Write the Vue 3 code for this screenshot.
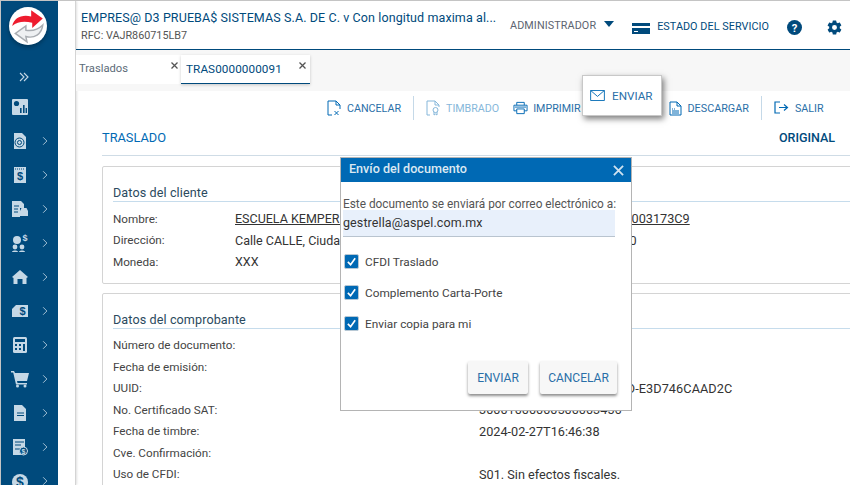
<script setup>
const navIcons = [
  { kind: 'chart', arrow: false },
  { kind: 'doc-at', arrow: true },
  { kind: 'doc-s', arrow: true },
  { kind: 'doc-car', arrow: true },
  { kind: 'people', arrow: true },
  { kind: 'home', arrow: true },
  { kind: 'folder', arrow: true },
  { kind: 'calc', arrow: true },
  { kind: 'cart', arrow: true },
  { kind: 'file', arrow: true },
  { kind: 'bill', arrow: true },
  { kind: 'coin', arrow: true }
]
const clientRows = [
  { label: 'Nombre:', value: 'ESCUELA KEMPER URGATE', u: true, right: 'EKU9003173C9', cls: 'rfc' },
  { label: 'Dirección:', value: 'Calle CALLE, Ciudad de México', right: 'C.P. 06000', cls: 'cp' },
  { label: 'Moneda:', value: 'XXX', right: '' }
]
const docRows = [
  { label: 'Número de documento:', right: 'TRAS0000000091' },
  { label: 'Fecha de emisión:', right: '2024-02-27T16:46:30' },
  { label: 'UUID:', right: '81002381-4041-4030-806D-E3D746CAAD2C', cls: 'uuid' },
  { label: 'No. Certificado SAT:', right: '30001000000500003456' },
  { label: 'Fecha de timbre:', right: '2024-02-27T16:46:38' },
  { label: 'Cve. Confirmación:', right: '' },
  { label: 'Uso de CFDI:', right: 'S01. Sin efectos fiscales.' }
]
const checks = ['CFDI Traslado', 'Complemento Carta-Porte', 'Enviar copia para mi']
</script>

<template>
  <div class="app">
    <aside class="side">
      <div class="logo">
        <svg viewBox="0 0 36 36" width="38" height="38">
          <circle cx="18" cy="18" r="18" fill="#fff"/>
          <path d="M3 18C5 10 12 7 21 9V3l11 8-10 9v-5c-8-2-14-1-19 3z" fill="#ee1c2e"/>
          <path d="M32 17c-1 9-8 13-16 11l1 5-11-8 10-7v4c6 1 12-1 16-5z" fill="#eef0f2" stroke="#a9adb2" stroke-width="1.400"/>
        </svg>
      </div>
      <svg class="dbl" viewBox="0 0 10 10" width="10" height="10"><path d="M1 1l4 4-4 4M5 1l4 4-4 4" fill="none" stroke="#c5d8e6" stroke-width="1.100"/></svg>
      <div class="nav">
        <div v-for="n in navIcons" :key="n.kind" class="nav-item">
          <svg viewBox="0 0 18 18" width="18" height="18" class="nav-ic">
            <g v-if="n.kind === 'chart'"><rect x="1" y="1" width="16" height="16" rx="1" fill="#c5d8e6"/><circle cx="5.500" cy="5.500" r="2.600" fill="#004a7c"/><path d="M9 15V10h1.600v5zM12 15V7h1.600v8zM14.600 15v-5H16v5z" fill="#004a7c"/></g>
            <g v-else-if="n.kind === 'doc-at'"><path d="M3 1h8l4 4v12H3z" fill="#c5d8e6"/><circle cx="8.500" cy="10.500" r="4.500" fill="none" stroke="#004a7c"/><circle cx="8.500" cy="10.500" r="2" fill="none" stroke="#004a7c"/></g>
            <g v-else-if="n.kind === 'doc-s'"><rect x="3" y="1" width="12" height="16" fill="#c5d8e6"/><path d="M4 3h10" stroke="#004a7c" stroke-dasharray="1 1"/><text x="9" y="14" text-anchor="middle" class="gl">$</text></g>
            <g v-else-if="n.kind === 'doc-car'"><path d="M1 1h9l3 3v4H9v9H1z" fill="#c5d8e6"/><path d="M3 6h5M3 9h4M3 12h4" stroke="#004a7c"/><path d="M9 11l1.500-3h5L17 11v5h-8z" fill="#c5d8e6"/></g>
            <g v-else-if="n.kind === 'people'"><circle cx="6" cy="6" r="4" fill="#c5d8e6"/><circle cx="4" cy="13" r="2.400" fill="#c5d8e6"/><circle cx="11" cy="13" r="2.400" fill="#c5d8e6"/><path d="M1 18c0-2 6-2 6 0zM8 18c0-2 6-2 6 0z" fill="#c5d8e6"/><text x="14" y="7" text-anchor="middle" class="gl2">$</text></g>
            <g v-else-if="n.kind === 'home'"><path d="M9 2l8 7-1.500 1v6h-4v-5h-5v5h-4v-6L1 9z" fill="#c5d8e6"/></g>
            <g v-else-if="n.kind === 'folder'"><path d="M5 3h12v12H1V7z" fill="#c5d8e6"/><text x="11.500" y="13" text-anchor="middle" class="gl">$</text></g>
            <g v-else-if="n.kind === 'calc'"><rect x="2" y="1" width="14" height="16" rx="1.500" fill="#c5d8e6"/><rect x="4" y="3" width="10" height="3" fill="#004a7c"/><path d="M4 8h2v2H4zM8 8h2v2H8zM12 8h2v7h-2zM4 12h2v2H4zM8 12h2v2H8z" fill="#004a7c"/></g>
            <g v-else-if="n.kind === 'cart'"><path d="M0 1h3l1 2h14l-2 8H6l.5 2H16v1.500H5L2.200 2.500H0z" fill="#c5d8e6"/><circle cx="6.500" cy="16" r="1.500" fill="#c5d8e6"/><circle cx="14" cy="16" r="1.500" fill="#c5d8e6"/></g>
            <g v-else-if="n.kind === 'file'"><path d="M3 1h8l4 4v12H3z" fill="#c5d8e6"/><path d="M6 9h7M6 11.500h7" stroke="#004a7c"/></g>
            <g v-else-if="n.kind === 'bill'"><path d="M2 1h12v9h-3v7H2z" fill="#c5d8e6"/><path d="M4 4h9M4 7h6M4 11h5" stroke="#004a7c"/><circle cx="12.500" cy="13" r="4" fill="#004a7c" stroke="#c5d8e6"/><text x="12.500" y="15.500" text-anchor="middle" class="gl3">$</text></g>
            <g v-else><circle cx="9" cy="10" r="8" fill="#c5d8e6"/><text x="9" y="15" text-anchor="middle" class="gl4">$</text></g>
          </svg>
          <svg v-if="n.arrow" viewBox="0 0 8 12" width="6" height="10" class="chev"><path d="M1.500 1l5 5-5 5" fill="none" stroke="#c5d8e6" stroke-width="1.100"/></svg>
        </div>
      </div>
    </aside>

    <div class="gutter"></div>

    <main class="main">
      <header class="top">
        <div class="company">
          <div class="c-name">EMPRES@ D3 PRUEBA$ SISTEMAS S.A. DE C. v Con longitud maxima al...</div>
          <div class="c-rfc">RFC: VAJR860715LB7</div>
        </div>
        <div class="user">ADMINISTRADOR</div>
        <svg class="caret" viewBox="0 0 10 6" width="10" height="6"><path d="M0 0h10L5 6z" fill="#004a7c"/></svg>
        <svg class="card" viewBox="0 0 18 11" width="18" height="11"><path d="M0 0h18v3H0zM0 5h18v6H0z" fill="#004a7c"/><path d="M2 8.500h4" stroke="#fff"/></svg>
        <div class="status">ESTADO DEL SERVICIO</div>
        <svg class="help" viewBox="0 0 16 16" width="15" height="15"><circle cx="8" cy="8" r="8" fill="#004a7c"/><text x="8" y="12.500" text-anchor="middle" class="q">?</text></svg>
        <svg class="gear" viewBox="0 0 24 24" width="17" height="17"><path fill="#004a7c" d="M19.400 13c.04-.33.1-.66.1-1s-.06-.67-.1-1l2.100-1.650c.2-.15.25-.42.13-.64l-2-3.460c-.12-.22-.39-.3-.61-.22l-2.490 1c-.52-.4-1.080-.73-1.690-.98l-.38-2.650A.5.5 0 0 0 14 2h-4a.5.5 0 0 0-.49.42l-.38 2.650c-.61.25-1.170.59-1.690.98l-2.490-1c-.23-.09-.49 0-.61.22l-2 3.460c-.13.22-.07.49.12.64L4.570 11c-.04.33-.07.66-.07 1s.03.67.07 1l-2.110 1.650c-.19.15-.25.42-.12.64l2 3.460c.12.22.39.3.61.22l2.490-1c.52.4 1.080.73 1.690.98l.38 2.650c.03.24.24.42.49.42h4c.25 0 .46-.18.49-.42l.38-2.650c.61-.25 1.170-.59 1.690-.98l2.490 1c.23.09.49 0 .61-.22l2-3.460c.12-.22.07-.49-.13-.64zM12 15.500a3.500 3.500 0 1 1 0-7 3.500 3.500 0 0 1 0 7z"/></svg>
      </header>

      <div class="tabs">
        <div class="tab first"><span>Traslados</span><svg class="x" viewBox="0 0 7 7" width="7" height="7"><path d="M.5.5l6 6M6.500.5l-6 6" stroke="#555" stroke-width="1.300"/></svg></div>
        <div class="tab active"><span>TRAS0000000091</span><svg class="x" viewBox="0 0 7 7" width="7" height="7"><path d="M.5.5l6 6M6.500.5l-6 6" stroke="#555" stroke-width="1.300"/></svg></div>
      </div>

      <div class="content">
        <div class="toolbar">
          <div class="tool">
            <svg viewBox="0 0 14 16" width="14" height="16"><path d="M5 15H1V1h8l4 4v4M9 1v4h4M7.500 11l4 4M11.500 11l-4 4" fill="none" stroke="#0069b4"/></svg>
            <span>CANCELAR</span>
          </div>
          <div class="sep"></div>
          <div class="tool dim">
            <svg viewBox="0 0 14 16" width="14" height="16"><path d="M4 15H1V1h8l4 4v2M9 1v4h4" fill="none" stroke="#86b7da"/><circle cx="9.500" cy="10" r="2.500" fill="none" stroke="#86b7da"/><path d="M8 12v3l1.500-1 1.500 1v-3" fill="none" stroke="#86b7da"/></svg>
            <span>TIMBRADO</span>
          </div>
          <div class="tool print">
            <svg viewBox="0 0 16 14" width="15" height="14"><path d="M4 4V1h8v3M4 10H1V4h14v6h-3M4 8h8v5H4zM2 6h12" fill="none" stroke="#0069b4"/></svg>
            <span>IMPRIMIR</span>
          </div>
          <div class="tool down">
            <svg viewBox="0 0 13 15" width="13" height="15"><path d="M1 1h7l4 4v9H1zM8 1v4h4" fill="none" stroke="#0069b4"/><path d="M3 8h1M5 8h1M3 10h7M3 12h7" stroke="#0069b4"/></svg>
            <span>DESCARGAR</span>
          </div>
          <div class="sep s2"></div>
          <div class="tool exit">
            <svg viewBox="0 0 15 14" width="15" height="14"><path d="M6 1H1v11h5M5 6.500h8M10 3.500l3.500 3-3.500 3" fill="none" stroke="#0069b4" stroke-width="1.200"/></svg>
            <span>SALIR</span>
          </div>
        </div>

        <div class="title-row">
          <span class="title">TRASLADO</span>
          <span class="orig">ORIGINAL</span>
        </div>

        <section class="panel p1">
          <h3>Datos del cliente</h3>
          <div v-for="r in clientRows" :key="r.label" class="row">
            <span class="lab">{{ r.label }}</span>
            <span class="val" :class="{ u: r.u }">{{ r.value }}</span>
            <span class="rval" :class="r.cls">{{ r.right }}</span>
          </div>
        </section>

        <section class="panel p2">
          <h3>Datos del comprobante</h3>
          <div v-for="r in docRows" :key="r.label" class="row">
            <span class="lab">{{ r.label }}</span>
            <span class="val"></span>
            <span class="rval" :class="r.cls">{{ r.right }}</span>
          </div>
        </section>
      </div>
    </main>

    <div class="popup">
      <svg viewBox="0 0 16 12" width="15" height="11"><path d="M.5.5h15v11H.5zM.5.5L8 7l7.500-6.500" fill="none" stroke="#0069b4"/></svg>
      <span>ENVIAR</span>
    </div>

    <div class="modal">
      <div class="m-head">
        <span>Envío del documento</span>
        <svg viewBox="0 0 12 12" width="11" height="11"><path d="M1 1l10 10M11 1L1 11" stroke="#cfe2f0" stroke-width="2"/></svg>
      </div>
      <div class="m-body">
        <div class="m-text">Este documento se enviará por correo electrónico a:</div>
        <div class="m-input">gestrella@aspel.com.mx</div>
        <div class="m-checks">
          <label v-for="c in checks" :key="c" class="chk">
            <span class="box"><svg viewBox="0 0 12 12" width="11" height="11"><path d="M2 6.500l3 3 5-7" fill="none" stroke="#fff" stroke-width="1.800"/></svg></span>
            <span>{{ c }}</span>
          </label>
        </div>
        <div class="m-actions">
          <button class="btn b1">ENVIAR</button>
          <button class="btn b2">CANCELAR</button>
        </div>
      </div>
    </div>
  </div>
</template>

<style>
html, body { margin: 0; padding: 0; background: #fff; }
</style>

<style scoped>
.app {
  position: relative;
  display: flex;
  width: 850px;
  height: 485px;
  overflow: hidden;
  box-sizing: border-box;
  border-top: 1px solid #c4c4c4;
  border-left: 1px solid #c4c4c4;
  background: #fff;
  font-family: Roboto, "Liberation Sans", sans-serif;
  font-size: 12px;
  color: #333;
}
.side {
  width: 57px;
  flex: none;
  background: #004a7c;
  display: flex;
  flex-direction: column;
  align-items: flex-start;
}
.logo {
  flex: none;
  margin: 6px 0 0 8px;
  width: 38px;
  height: 38px;
  border-radius: 50%;
  box-shadow: 0 2px 4px rgba(0,0,0,.3);
}
.dbl { flex: none; margin: 27px 0 0 18px; }
.nav { flex: none; margin-top: 8px; display: flex; flex-direction: column; }
.nav-item { height: 34px; flex: none; display: flex; align-items: center; width: 57px; }
.nav-ic { flex: none; margin-left: 10px; }
.chev { flex: none; margin-left: 13px; }
.gl { font: 700 11px "Liberation Sans", sans-serif; fill: #004a7c; }
.gl2 { font: 700 9px "Liberation Sans", sans-serif; fill: #c5d8e6; }
.gl3 { font: 700 7px "Liberation Sans", sans-serif; fill: #c5d8e6; }
.gl4 { font: 700 14px "Liberation Sans", sans-serif; fill: #004a7c; }
.gutter { width: 17px; flex: none; border-right: 1px solid #d4d4d4; box-shadow: 1px 0 2px rgba(0,0,0,.12); }
.main { flex: 1; min-width: 0; display: flex; flex-direction: column; }
.top {
  height: 48px;
  flex: none;
  border-bottom: 1px solid #004a7c;
  display: flex;
  align-items: center;
}
.company { width: 429px; padding-left: 5px; box-sizing: border-box; flex: none; }
.c-name { font-size: 12.500px; color: #004a7c; line-height: 15px; margin-top: 1px; white-space: nowrap; letter-spacing: .1px; }
.c-rfc { font-size: 10.800px; color: #555; margin-top: 4px; line-height: 13px; }
.user { font-size: 10.800px; color: #5d6470; margin-left: 5px; letter-spacing: .1px; }
.caret { margin: -2px 0 0 8px; flex: none; }
.card { margin: 6px 0 0 18px; flex: none; }
.status { font-size: 10.800px; color: #004a7c; margin: 2px 0 0 7px; letter-spacing: .05px; }
.help { margin: 4px 0 0 18px; flex: none; }
.q { font: 700 12px Roboto, sans-serif; fill: #fff; }
.gear { margin: 4px 0 0 24px; flex: none; }
.tabs {
  height: 41px;
  flex: none;
  background: #f7f7f7;
  display: flex;
  align-items: flex-start;
  box-sizing: border-box;
  padding-top: 5px;
}
.tab { position: relative; box-sizing: border-box; display: flex; align-items: center; height: 29px; background: #fff; }
.tab span { margin-top: -1px; }
.first { width: 105px; padding-left: 3px; font-size: 11.200px; color: #5b6b78; }
.first span { margin-top: -3px; }
.active {
  width: 129px;
  border-bottom: 1px solid #004a7c;
  padding-left: 5px;
  font-size: 11.700px;
  color: #004a7c;
  box-shadow: 0 1px 3px rgba(0,0,0,.2);
  letter-spacing: .1px;
}
.x { position: absolute; top: 7px; }
.first .x { right: 3px; }
.active .x { right: 4px; }
.content { flex: 1; min-height: 0; padding: 0 0 0 26px; display: flex; flex-direction: column; }
.toolbar { height: 32px; flex: none; display: flex; align-items: center; margin-top: 1px; padding-left: 225px; }
.tool { display: flex; align-items: center; gap: 6px; font-size: 10.700px; white-space: nowrap; }
.tool svg { flex: none; }
.tool span { color: #2a6fa8; }
.sep { width: 1px; height: 24px; background: #c5d9e8; margin: 0 12px; flex: none; }
.dim span { color: #86b7da; }
.print { margin-left: 14px; gap: 5px; }
.down { margin-left: 88px; font-size: 10.800px; }
.sep.s2 { margin: 0 12px 0 12px; }
.title-row {
  margin-top: 6px;
  height: 26px;
  flex: none;
  box-sizing: border-box;
  border-bottom: 1px solid #cfdce6;
  display: flex;
  justify-content: space-between;
  align-items: flex-start;
  padding-right: 15px;
}
.title { font-size: 12.800px; color: #0069b4; line-height: 16px; }
.orig { font-size: 12.500px; color: #004a7c; line-height: 16px; font-weight: 500; }
.panel {
  flex: none;
  border: 1px solid #d4d4d4;
  border-radius: 2px;
  margin-right: -6px;
  box-sizing: border-box;
  padding: 18px 0 0 10px;
}
.p1 { margin-top: 10px; height: 118px; }
.p2 { margin-top: 9px; height: 200px; }
h3 {
  margin: 0 0 6px;
  font-size: 12.600px;
  font-weight: 400;
  color: #2b4a5e;
  line-height: 16px;
  border-bottom: 1px solid #c6dcec;
  letter-spacing: .1px;
}
.p2 h3 { margin-bottom: 5.500px; }
.row { display: flex; height: 21.500px; align-items: center; color: #444; }
.lab { width: 122px; flex: none; font-size: 11.700px; white-space: nowrap; }
.val { width: 244px; flex: none; font-size: 12.500px; white-space: nowrap; overflow: hidden; color: #333; }
.rval { font-size: 12.700px; white-space: nowrap; color: #333; }
.rfc { margin-left: 122px; text-decoration: underline; }
.cp { margin-left: 98px; }
.uuid { letter-spacing: .08px; }
.u { text-decoration: underline; }
.popup {
  position: absolute;
  left: 581px;
  top: 74px;
  width: 80px;
  height: 41px;
  box-sizing: border-box;
  background: #fff;
  border: 1px solid #c8c8c8;
  box-shadow: 2px 3px 6px rgba(0,0,0,.5);
  display: flex;
  align-items: center;
  gap: 7px;
  padding-left: 7px;
  font-size: 11.700px;
  color: #2a6fa8;
}
.modal {
  position: absolute;
  left: 339px;
  top: 156px;
  width: 292px;
  height: 254px;
  box-sizing: border-box;
  background: #fff;
  border: 1px solid #b4b4b4;
  display: flex;
  flex-direction: column;
}
.m-head {
  height: 24px;
  flex: none;
  box-sizing: border-box;
  background: #0069b4;
  color: #dbe8f2;
  font-size: 12.600px;
  font-weight: 500;
  display: flex;
  align-items: center;
  justify-content: space-between;
  padding: 0 7px 0 8px;
}
.m-head span { margin-top: -3px; }
.m-body { flex: 1; padding: 0 1px 0 2px; display: flex; flex-direction: column; }
.m-text { margin-top: 16px; font-size: 11.850px; line-height: 12px; color: #555; white-space: nowrap; }
.m-input {
  width: 272px;
  height: 27px;
  flex: none;
  box-sizing: border-box;
  background: #e8f0fb;
  border-bottom: 1px solid #b9c4cf;
  font-size: 12.500px;
  line-height: 26px;
  color: #333;
  letter-spacing: .1px;
}
.m-checks { margin-top: 9px; display: flex; flex-direction: column; }
.chk { height: 31px; display: flex; align-items: center; gap: 6px; font-size: 11.800px; color: #444; }
.box {
  width: 15px;
  height: 15px;
  box-sizing: border-box;
  margin-left: 1px;
  background: #0069b4;
  border: 1px solid #b8c8d4;
  border-radius: 2px;
  display: flex;
  align-items: center;
  justify-content: center;
}
.m-actions { display: flex; justify-content: flex-end; gap: 12px; margin-top: 22px; padding-right: 13px; }
.btn {
  height: 33px;
  border: 0;
  border-radius: 2px;
  background: #f7f7f7;
  box-shadow: 0 2px 3px rgba(0,0,0,.45);
  color: #2a6fa8;
  font: 12px Roboto, sans-serif;
  padding: 0;
}
.b1 { width: 60px; }
.b2 { width: 77px; }
</style>
